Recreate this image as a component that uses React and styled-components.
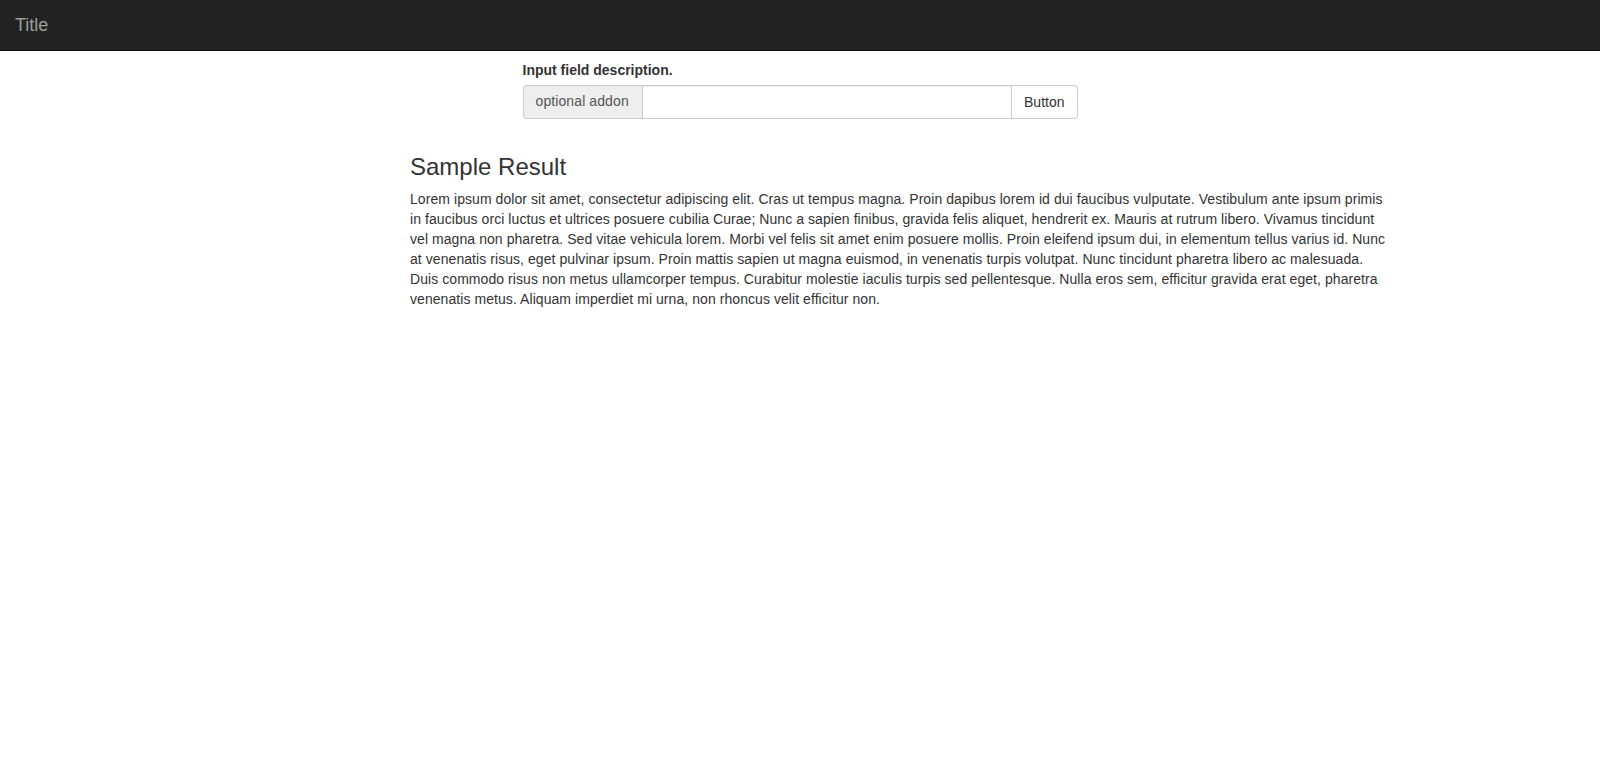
import React from "react";
import styled, { createGlobalStyle } from "styled-components";

const Global = createGlobalStyle`
  * { box-sizing: border-box; }
  body {
    margin: 0;
    font-family: "Liberation Sans", Arial, Helvetica, sans-serif;
    font-size: 14px;
    line-height: 1.42857;
    color: #333;
    background: #fff;
  }
`;

const Navbar = styled.nav`
  height: 51px;
  background: #222;
  border-bottom: 1px solid #080808;
  display: flex;
  align-items: center;
`;

const Brand = styled.a`
  padding: 0 15px;
  font-size: 18px;
  line-height: 20px;
  color: #9d9d9d;
  text-decoration: none;
`;

const Container = styled.div`
  width: 1170px;
  margin: 0 auto;
  padding-top: 9px;
`;

const FormArea = styled.div`
  width: 555px;
  margin: 0 auto;
  padding-bottom: 15px;
`;

const Label = styled.label`
  display: block;
  font-weight: bold;
  margin-bottom: 5px;
  line-height: 20px;
`;

const InputGroup = styled.div`
  display: flex;
  height: 34px;
`;

const Addon = styled.span`
  display: flex;
  align-items: center;
  padding: 6px 13px 6px 12px;
  background: #eee;
  border: 1px solid #ccc;
  border-right: 0;
  border-radius: 4px 0 0 4px;
  color: #555;
  font-size: 14px;
  letter-spacing: 0.1px;
  white-space: nowrap;
`;

const Input = styled.input`
  flex: 1;
  min-width: 0;
  height: 34px;
  padding: 6px 12px;
  border: 1px solid #ccc;
  box-shadow: inset 0 1px 1px rgba(0, 0, 0, 0.075);
  font-family: inherit;
  font-size: 14px;
  color: #555;
  outline: none;
`;

const Button = styled.button`
  padding: 6px 12px;
  background: #fff;
  border: 1px solid #ccc;
  border-left: 0;
  border-radius: 0 4px 4px 0;
  color: #333;
  font-family: inherit;
  font-size: 14px;
  line-height: 20px;
  cursor: pointer;
`;

const Result = styled.section`
  margin-left: 195px;
  width: 982px;
  padding-top: 1px;
`;

const Heading = styled.h3`
  font-size: 24px;
  font-weight: 500;
  line-height: 1.1;
  margin: 19px 0 10px;
  color: #333;
`;

const Paragraph = styled.p`
  margin: 0 0 10px;
  letter-spacing: 0.065px;
`;

export default function App() {
  return (
    <>
      <Global />
      <Navbar>
        <Brand href="#">Title</Brand>
      </Navbar>
      <Container>
        <FormArea>
          <Label>Input field description.</Label>
          <InputGroup>
            <Addon>optional addon</Addon>
            <Input type="text" />
            <Button>Button</Button>
          </InputGroup>
        </FormArea>
        <Result>
          <Heading>Sample Result</Heading>
          <Paragraph>
            Lorem ipsum dolor sit amet, consectetur adipiscing elit. Cras ut tempus magna. Proin dapibus lorem id dui faucibus vulputate. Vestibulum ante ipsum primis in faucibus orci luctus et ultrices posuere cubilia Curae; Nunc a sapien finibus, gravida felis aliquet, hendrerit ex. Mauris at rutrum libero. Vivamus tincidunt vel magna non pharetra. Sed vitae vehicula lorem. Morbi vel felis sit amet enim posuere mollis. Proin eleifend ipsum dui, in elementum tellus varius id. Nunc at venenatis risus, eget pulvinar ipsum. Proin mattis sapien ut magna euismod, in venenatis turpis volutpat. Nunc tincidunt pharetra libero ac malesuada. Duis commodo risus non metus ullamcorper tempus. Curabitur molestie iaculis turpis sed pellentesque. Nulla eros sem, efficitur gravida erat eget, pharetra venenatis metus. Aliquam imperdiet mi urna, non rhoncus velit efficitur non.
          </Paragraph>
        </Result>
      </Container>
    </>
  );
}
